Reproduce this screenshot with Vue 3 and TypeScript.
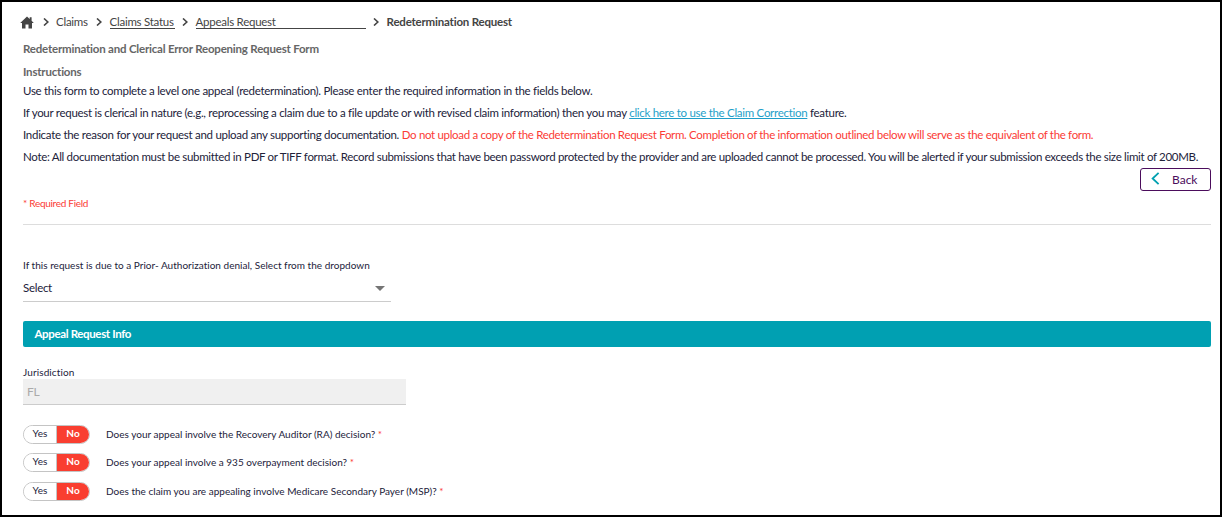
<script setup lang="ts">
import { ref } from "vue";

type Question = {
  id: string;
  text: string;
  answer: "yes" | "no";
};

const priorAuth = ref("Select");
const jurisdiction = ref("FL");

const questions = ref<Question[]>([
  {
    id: "ra",
    text: "Does your appeal involve the Recovery Auditor (RA) decision?",
    answer: "no",
  },
  {
    id: "overpayment",
    text: "Does your appeal involve a 935 overpayment decision?",
    answer: "no",
  },
  {
    id: "msp",
    text: "Does the claim you are appealing involve Medicare Secondary Payer (MSP)?",
    answer: "no",
  },
]);
</script>

<template>
  <main class="page">
    <nav class="breadcrumb">
      <svg class="home" viewBox="0 0 14 13">
        <path
          d="M7 0.4 L9.7 3 V1.3 H11.6 V4.8 L13.8 7 H12 V12.4 H8.5 V8.4 H5.5 V12.4 H2 V7 H0.2 Z"
        />
      </svg>
      <svg class="chevron first" viewBox="0 0 6 8">
        <path d="M1 0.5 L4.8 4 L1 7.5" />
      </svg>
      <span class="crumb claims">Claims</span>
      <svg class="chevron" viewBox="0 0 6 8">
        <path d="M1 0.5 L4.8 4 L1 7.5" />
      </svg>
      <a class="crumb link status">Claims Status</a>
      <svg class="chevron" viewBox="0 0 6 8">
        <path d="M1 0.5 L4.8 4 L1 7.5" />
      </svg>
      <a class="crumb link appeals">Appeals Request</a>
      <svg class="chevron" viewBox="0 0 6 8">
        <path d="M1 0.5 L4.8 4 L1 7.5" />
      </svg>
      <span class="crumb current">Redetermination Request</span>
    </nav>

    <h1 class="title">
      Redetermination and Clerical Error Reopening Request Form
    </h1>
    <h2 class="subtitle">Instructions</h2>

    <section class="instructions">
      <p>
        Use this form to complete a level one appeal (redetermination). Please
        enter the required information in the fields below.
      </p>
      <p>
        If your request is clerical in nature (e.g., reprocessing a claim due to
        a file update or with revised claim information) then you may
        <a class="correction">click here to use the Claim Correction</a>
        feature.
      </p>
      <p>
        Indicate the reason for your request and upload any supporting
        documentation.
        <span class="warning"
          >Do not upload a copy of the Redetermination Request Form. Completion
          of the information outlined below will serve as the equivalent of the
          form.</span
        >
      </p>
      <p class="note">
        Note: All documentation must be submitted in PDF or TIFF format. Record
        submissions that have been password protected by the provider and are
        uploaded cannot be processed. You will be alerted if your submission
        exceeds the size limit of 200MB.
      </p>
    </section>

    <div class="actions">
      <button type="button" class="back-button">
        <svg class="back-icon" viewBox="0 0 9 13">
          <path d="M7.6 0.8 L1.6 6.5 L7.6 12.2" />
        </svg>
        <span>Back</span>
      </button>
    </div>

    <p class="required">* Required Field</p>
    <hr class="divider" />

    <label class="field-label prior-label"
      >If this request is due to a Prior- Authorization denial, Select from the
      dropdown</label
    >
    <div class="select">
      <span>{{ priorAuth }}</span>
      <svg class="arrow" viewBox="0 0 10 5">
        <path d="M0 0 H10 L5 5 Z" />
      </svg>
    </div>

    <h3 class="section-bar">Appeal Request Info</h3>

    <label class="field-label jurisdiction-label">Jurisdiction</label>
    <div class="disabled-input">{{ jurisdiction }}</div>

    <div class="questions">
      <div v-for="q in questions" :key="q.id" class="question">
        <div class="toggle">
          <button
            type="button"
            :class="['option', 'yes', { active: q.answer === 'yes' }]"
            @click="q.answer = 'yes'"
          >
            Yes
          </button>
          <button
            type="button"
            :class="['option', 'no', { active: q.answer === 'no' }]"
            @click="q.answer = 'no'"
          >
            No
          </button>
        </div>
        <span class="question-text"
          >{{ q.text }} <span class="star">*</span></span
        >
      </div>
    </div>
  </main>
</template>

<style>
body {
  margin: 0;
  background: #fff;
}
</style>

<style scoped>
.page {
  box-sizing: border-box;
  width: 1222px;
  height: 517px;
  padding: 0 9px 0 21px;
  border: 2px solid #000;
  display: flex;
  flex-direction: column;
  overflow: hidden;
  background: #fff;
  color: #22223a;
  font-family: Lato, "Liberation Sans", sans-serif;
  font-size: 11.5px;
  letter-spacing: -0.288px;
  white-space: nowrap;
}

p,
h1,
h2,
h3 {
  margin: 0;
}

.breadcrumb {
  height: 16px;
  margin: 12px 0 0 -3px;
  display: flex;
  align-items: center;
  line-height: 16px;
  letter-spacing: -0.26px;
  color: #444;
}

.home {
  width: 14px;
  height: 13px;
  fill: #444;
}

.chevron {
  width: 6px;
  height: 8px;
  margin: 0 7.5px 0 7.5px;
  fill: none;
  stroke: #444;
  stroke-width: 1.6;
}

.chevron.first {
  margin-left: 8.5px;
}

.claims {
  width: 32.6px;
}

.status {
  width: 65px;
}

.appeals {
  width: 170px;
}

.link {
  height: 13px;
  line-height: 13px;
  border-bottom: 1px solid #444;
}

.current {
  font-weight: 700;
  letter-spacing: -0.2px;
}

.title,
.subtitle {
  font-size: 11.5px;
  font-weight: 700;
  line-height: 16px;
  letter-spacing: -0.2px;
  color: #666;
}

.title {
  margin-top: 11px;
}

.subtitle {
  margin-top: 7px;
}

.instructions p {
  height: 22px;
  line-height: 22px;
}

.instructions .note {
  letter-spacing: -0.315px;
}

.correction {
  color: #1e9fc9;
  text-decoration: underline;
}

.warning {
  color: #fb3b35;
  letter-spacing: -0.318px;
}

.actions {
  display: flex;
  justify-content: flex-end;
}

.back-button {
  box-sizing: border-box;
  width: 71px;
  height: 23px;
  padding: 0 0 0 10px;
  display: flex;
  align-items: center;
  gap: 12px;
  border: 1px solid #4b0d5c;
  border-radius: 3px;
  background: #fff;
  color: #4b0d5c;
  font: inherit;
  font-size: 12px;
  letter-spacing: 0;
}

.back-icon {
  width: 9px;
  height: 13px;
  margin-top: -2px;
  fill: none;
  stroke: #00a0b0;
  stroke-width: 1.8;
}

.required {
  margin-top: 4px;
  line-height: 16px;
  font-size: 10px;
  color: #fb3b35;
}

.divider {
  width: 100%;
  height: 1px;
  margin: 13px 0 0;
  border: 0;
  flex-shrink: 0;
  background: #ddd;
}

.field-label {
  font-size: 10px;
  line-height: 14px;
  letter-spacing: 0.02px;
}

.prior-label {
  margin-top: 33px;
}

.select {
  box-sizing: border-box;
  width: 368px;
  height: 28px;
  margin-top: 2px;
  padding: 0 6px 0 0;
  display: flex;
  align-items: center;
  justify-content: space-between;
  border-bottom: 1px solid #ccc;
}

.arrow {
  width: 10px;
  height: 5px;
  margin-top: 2px;
  fill: #757575;
}

.section-bar {
  height: 26px;
  margin-top: 19px;
  padding-left: 11.5px;
  border-radius: 2px;
  background: #00a0b2;
  color: #fff;
  font-size: 11.5px;
  font-weight: 700;
  line-height: 26px;
  letter-spacing: -0.36px;
}

.jurisdiction-label {
  margin-top: 18px;
  letter-spacing: 0.12px;
}

.disabled-input {
  box-sizing: border-box;
  width: 383px;
  height: 26px;
  padding-left: 4px;
  border-bottom: 1px solid #ccc;
  background: #f0f0f0;
  color: #aaa;
  font-size: 12px;
  line-height: 26px;
}

.questions {
  margin-top: 20px;
  display: flex;
  flex-direction: column;
  gap: 9px;
}

.question {
  height: 19px;
  display: flex;
  align-items: center;
  gap: 16px;
  font-size: 10px;
  letter-spacing: 0.01px;
}

.question:last-child {
  margin-top: 1px;
}

.question-text {
  padding-bottom: 2px;
}

.toggle {
  box-sizing: border-box;
  width: 67px;
  height: 19px;
  display: flex;
  overflow: hidden;
  border: 1px solid #c4c4c4;
  border-radius: 10px;
}

.option {
  flex: 1;
  padding: 0 0 2px;
  border: 0;
  background: #fff;
  color: #22223a;
  font-family: inherit;
  font-size: 10px;
  line-height: 15px;
}

.option.no {
  border-left: 1px solid #c4c4c4;
}

.option.active {
  background: #f93e30;
  color: #fff;
  font-weight: 700;
}

.star {
  color: #fb3b35;
}
</style>
